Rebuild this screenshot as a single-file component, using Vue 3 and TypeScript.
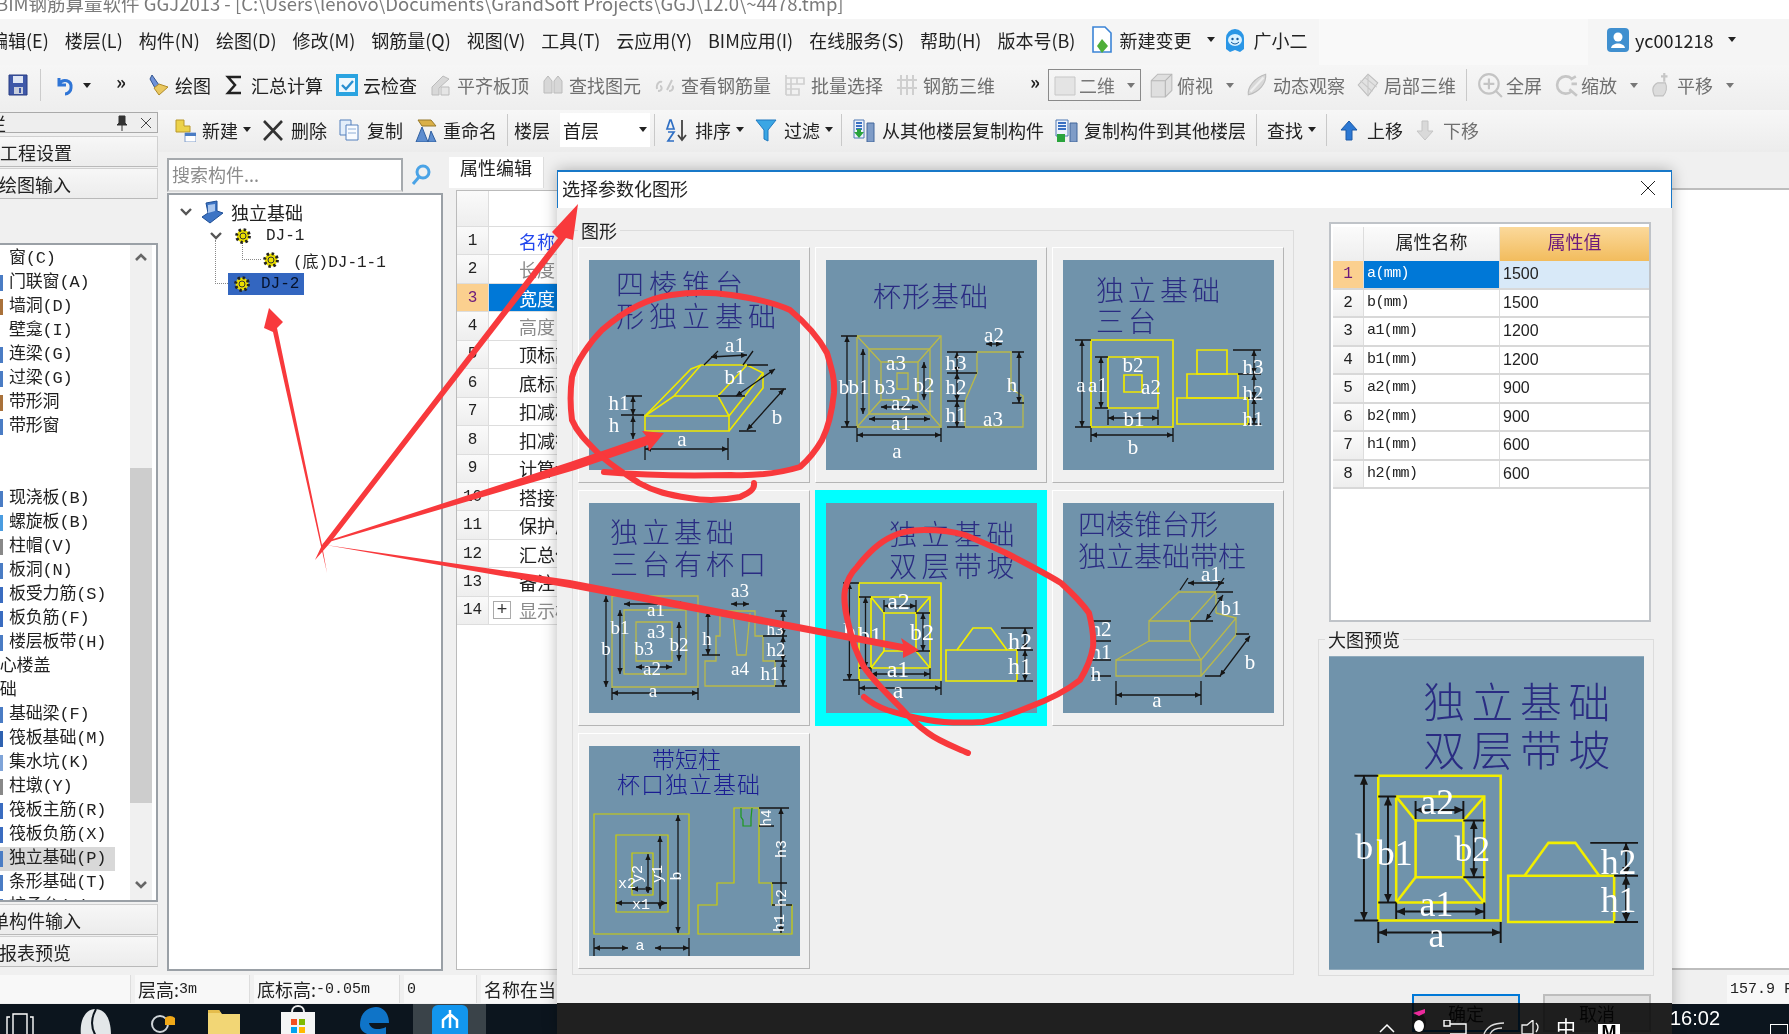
<script setup lang="ts">
interface Shape { d: string; f?: string; s?: string; w?: number }
interface Label { x: number; y: number; t: string; size?: number; rot?: number }
interface Diagram {
  titles: { x: number; y: number; t: string; size: number; gap: number }[]
  titleColor: string
  color: string
  width: number
  shapes: string[]
  dims: number[][]
  ticks: string
  labels: Label[]
  mono?: boolean
  active?: boolean
}

const L = (x: number, y: number, t: string, size?: number, rot?: number): Label => ({ x, y, t, size, rot })
const navy = '#2a2c82'

const diagrams: Diagram[] = [
  {
    titles: [
      { x: 27, y: 34.5, t: '四棱锥台', size: 28, gap: 5 },
      { x: 27, y: 66.5, t: '形独立基础', size: 28, gap: 5 },
    ],
    titleColor: navy,
    color: '#efe800',
    width: 1.6,
    shapes: [
      'M56 156H140V171H56Z',
      'M56 156L102 109L112 105H158L174 113V128L140 171',
      'M140 156L174 113M56 156L85 136H129L140 156M85 136L112 105M129 136L158 105',
    ],
    dims: [[56, 189, 139, 189], [122, 97, 158, 95], [186, 109, 147, 136], [195, 129, 158, 170], [44, 136, 44, 155], [44, 156, 44, 179]],
    ticks: 'M56 178V200M139 178V200M115 105L129 91M154 105L164 91M158 105H179M129 136H156M181 129H197M150 171H167M37 136H53M32 155H55',
    labels: [L(93, 186, 'a'), L(146, 92, 'a1'), L(146, 124, 'b1'), L(188, 164, 'b'), L(30, 150, 'h1'), L(25, 172, 'h')],
  },
  {
    titles: [{ x: 47, y: 47, t: '杯形基础', size: 28, gap: 1 }],
    titleColor: navy,
    color: '#b9b94a',
    width: 1.3,
    shapes: [
      'M31 76H115V167H31Z',
      'M43 89H104V154H43Z',
      'M55 102H92V140H55Z',
      'M71 113H82V129H71Z',
      'M31 76L55 102M115 76L92 102M31 167L55 140M115 167L92 140',
      'M151 92H185V129L197 136V167H139V141L151 113Z',
    ],
    dims: [[21, 76, 21, 167], [37, 89, 37, 154], [98, 102, 98, 140], [55, 147, 92, 147], [43, 159, 104, 159], [31, 175, 115, 175], [160, 84, 176, 84], [131, 92, 131, 113], [131, 113, 131, 141], [131, 141, 131, 167], [193, 92, 193, 143]],
    ticks: 'M15 76H31M15 167H31M31 168V182M115 168V182M121 92H151M121 113H151M121 141H139M121 167H139M186 92H198M186 143H198',
    labels: [L(168, 82, 'a2'), L(18, 134, 'b'), L(33, 134, 'b1'), L(59, 134, 'b3'), L(98, 132, 'b2'), L(70, 110, 'a3'), L(75, 150, 'a2'), L(75, 170, 'a1'), L(71, 198, 'a'), L(130, 110, 'h3'), L(130, 134, 'h2'), L(130, 162, 'h1'), L(186, 132, 'h'), L(167, 166, 'a3')],
  },
  {
    titles: [
      { x: 33, y: 41, t: '独立基础', size: 28, gap: 4 },
      { x: 33, y: 72, t: '三台', size: 28, gap: 4 },
    ],
    titleColor: navy,
    color: '#efe800',
    width: 1.7,
    shapes: ['M28 80H110V167H28Z', 'M45 97H95V148H45Z', 'M61 115H79V132H61Z', 'M134 90H164V114H134Z', 'M124 114H175V138H124Z', 'M114 138H185V164H114Z'],
    dims: [[19, 80, 19, 167], [38, 97, 38, 148], [45, 158, 95, 158], [28, 175, 110, 175], [191, 90, 191, 114], [191, 114, 191, 138], [191, 138, 191, 164]],
    ticks: 'M12 80H28M12 167H28M32 97H45M32 148H45M28 168V182M110 168V182M45 150V165M95 150V165M170 90H198M175 114H198M185 138H198M185 164H198',
    labels: [L(18, 132, 'a'), L(35, 132, 'a1'), L(70, 112, 'b2'), L(88, 134, 'a2'), L(71, 166, 'b1'), L(70, 194, 'b'), L(190, 114, 'h3'), L(190, 140, 'h2'), L(190, 166, 'h1')],
  },
  {
    titles: [
      { x: 21, y: 40, t: '独立基础', size: 28, gap: 4 },
      { x: 21, y: 72, t: '三台有杯口', size: 28, gap: 4 },
    ],
    titleColor: navy,
    color: '#b9b94a',
    width: 1.3,
    shapes: ['M23 93H109V184H23Z', 'M35 107H97V171H35Z', 'M47 119H83V158H47Z', 'M131 108H166V133H174V158H186V183H116V158H127V133H131Z', 'M144 110L148 152H157L161 110'],
    dims: [[17, 93, 17, 184], [31, 107, 31, 171], [23, 190, 109, 190], [35, 101, 97, 101], [90, 119, 90, 158], [47, 164, 83, 164], [142, 101, 160, 101], [119, 108, 119, 152], [194, 108, 194, 133], [194, 133, 194, 158], [194, 158, 194, 183]],
    ticks: 'M23 185V197M109 185V197M113 152H131M186 108H198M174 133H198M186 158H198M186 183H198',
    labels: [L(151, 94, 'a3', 19), L(67, 113, 'a1', 19), L(67, 135, 'a3', 19), L(31, 131, 'b1', 19), L(17, 152, 'b', 19), L(55, 152, 'b3', 19), L(90, 148, 'b2', 19), L(63, 172, 'a2', 19), L(64, 194, 'a', 19), L(118, 142, 'h', 19), L(151, 172, 'a4', 19), L(186, 132, 'h3', 17), L(187, 153, 'h2', 19), L(181, 177, 'h1', 19)],
  },
  {
    titles: [
      { x: 63, y: 41.5, t: '独立基础', size: 28, gap: 4.5 },
      { x: 63, y: 73.5, t: '双层带坡', size: 28, gap: 4.5 },
    ],
    titleColor: navy,
    color: '#f2ee00',
    width: 1.7,
    shapes: ['M33 80H115V177H33Z', 'M45 94H104V165H45Z', 'M58 110H90V148H58Z', 'M45 94L58 110M104 94L90 110M45 165L58 148M104 165L90 148', 'M120 147H191V178H120Z', 'M131 147L147 125H165L181 147'],
    dims: [[23.4, 80, 23.4, 177], [39.5, 94, 39.5, 165], [97, 110, 97, 148], [58, 103, 90, 103], [45, 171, 104, 171], [33, 185, 115, 185], [199, 125, 199, 147], [199, 147, 199, 178]],
    ticks: 'M17 80H33M17 177H33M33 94H45M33 165H45M90 110H104M90 148H104M58 97V109M90 97V109M45 165V176M104 165V176M33 178V192M115 178V192M175 125H207M191 147H207M191 178H207',
    labels: [L(23.5, 136, 'b', 24), L(44, 140, 'b1', 24), L(96, 137, 'b2', 24), L(72.5, 106, 'a2', 24), L(72, 174, 'a1', 24), L(72, 195, 'a', 24), L(194, 146, 'h2', 24), L(194, 171, 'h1', 24)],
    active: true,
  },
  {
    titles: [
      { x: 15, y: 32, t: '四棱锥台形', size: 28, gap: 0 },
      { x: 15, y: 64, t: '独立基础带柱', size: 28, gap: 0 },
    ],
    titleColor: navy,
    color: '#b9b94a',
    width: 1.3,
    shapes: ['M53 157H138V173H53Z', 'M86 118H127V138H86Z', 'M86 118L116 89H153L127 118V138M153 89V110', 'M53 157L86 138M138 157L127 138M138 157L173 115V132L138 173M153 110L173 115'],
    dims: [[125, 80, 161, 80], [160, 92, 143, 117], [187, 133, 157, 173], [53, 192, 138, 192]],
    ticks: 'M53 178V202M138 178V202M117 87L125 75M153 87L161 75M153 89H170M127 118H150M173 131H186M142 173H158M28 118H48M28 138H48M28 157H48M28 173H48',
    labels: [L(148, 78, 'a1'), L(168, 112, 'b1'), L(187, 166, 'b'), L(94, 204, 'a'), L(38, 133, 'h2'), L(38, 156, 'h1'), L(33, 178, 'h')],
  },
  {
    titles: [
      { x: 63, y: 22, t: '带短柱', size: 23, gap: 0 },
      { x: 28, y: 47, t: '杯口独立基础', size: 23, gap: 1 },
    ],
    titleColor: '#1a1c92',
    color: '#cfcf00',
    width: 1.2,
    shapes: ['M5 68H100V188H5Z', 'M27 89H79V166H27Z', 'M43 107H64V149H43Z', 'M145 62H170V137H183V159H203V188H109V159H128V137H145Z'],
    dims: [[89, 69, 89, 187], [71, 90, 71, 163], [59, 108, 59, 147], [43, 143, 63, 143], [27, 157, 78, 157], [5, 202, 39, 202], [66, 202, 100, 202], [192, 62, 192, 187]],
    ticks: 'M5 192V210M100 192V210M170 62H200M170 80H185M183 137H198M183 159H203',
    labels: [L(92, 130, 'b', 15, -90), L(73, 128, 'y1', 15, -90), L(53, 128, 'y2', 15, -90), L(38, 142, 'x2', 15), L(52, 163, 'x1', 15), L(51, 204, 'a', 15), L(182, 72, 'h4', 14, -90), L(197, 103, 'h3', 15, -90), L(197, 152, 'h2', 15, -90), L(195, 177, 'h1', 15, -90)],
    mono: true,
  },
]

const icons: Record<string, Shape[]> = {
  save: [{ d: 'M3 2H21V22H3Z', f: '#3f58a8', s: '#283d82' }, { d: 'M7 3H17V10H7Z', f: '#dfe6f4' }, { d: 'M8 14H17V21H8Z', f: '#c8cedc' }, { d: 'M13 15H15V20H13Z', f: '#3f58a8' }],
  undo: [{ d: 'M6 5V12H13M6 11C10 5 19 7 18 15C18 18 15 21 12 21', s: '#2f75d6', w: 3 }],
  draw: [{ d: 'M5 2L12 12L8 15L3 6Z', f: '#6e91d8', s: '#33558f' }, { d: 'M12 11L21 14L12 22L7 15Z', f: '#e9c75f', s: '#b08b2a' }],
  sum: [{ d: 'M18 4H5L12 12L5 20H18', s: '#222', w: 2.5 }],
  cloud: [{ d: 'M1 1H23V23H1Z', f: '#2aa3e0' }, { d: 'M4 5H20V19H4Z', f: '#eef7fd' }, { d: 'M7 12L11 16L18 8', s: '#2a8fd0', w: 2.4 }],
  align: [{ d: 'M3 22V14L14 3L20 6L10 15V22Z', f: '#d8d8d8', s: '#bbb' }, { d: 'M12 22V14H20V22Z', f: '#e5e5e5', s: '#bbb' }],
  find: [{ d: 'M3 20V8L7 3L11 8V20ZM13 20V8L17 3L21 8V20Z', f: '#d7d7d7', s: '#bbb' }],
  rebar: [{ d: 'M4 16C3 10 7 8 9 9M5 18C10 18 9 13 7 13M14 17L19 7M16 18C20 18 21 14 19 13', s: '#c9c9c9', w: 2 }],
  batch: [{ d: 'M3 2V22M3 5H21V11H3M3 16H16V22H3M8 5V22M14 5V11', s: '#d0d0d0', w: 1.7 }],
  rebar3: [{ d: 'M2 7H22M2 15H22M6 2V22M12 2V22M18 2V22', s: '#cfcfcf', w: 2 }],
  box: [{ d: 'M3 8L9 2H22V17L16 23H3Z', f: '#dfdfdf', s: '#bbb' }, { d: 'M3 8H16V23M16 8L22 2', s: '#b5b5b5' }],
  orbit: [{ d: 'M4 21C3 14 10 5 20 2C21 10 14 19 4 21Z', f: '#d8d8d8', s: '#bbb' }, { d: 'M6 18L18 5', s: '#eee', w: 2 }],
  local: [{ d: 'M12 2L21 10L12 22L3 12Z', f: '#e2e2e2', s: '#bdbdbd' }, { d: 'M5 8L16 18M9 5L20 14M12 2V22', s: '#c8c8c8' }],
  full: [{ d: 'M20 11A9 9 0 1 1 2 11A9 9 0 1 1 20 11ZM17 17L23 23M6 11H16M11 6V16', s: '#c4c4c4', w: 2 }],
  zoom: [{ d: 'M18 6A8 8 0 1 0 18 18M16 16L23 22M17 7L22 4M18 11H23', s: '#c6c6c6', w: 2.4 }],
  pan: [{ d: 'M6 22C3 16 5 12 9 10L16 10C18 14 17 19 14 22Z', f: '#dcdcdc', s: '#c0c0c0' }, { d: 'M15 9V1M12 4H18', s: '#c6c6c6', w: 2 }],
  plan: [{ d: 'M2 4H22V22H2Z', f: '#e4e4e4', s: '#c7c7c7' }],
  add: [{ d: 'M4 2H12V8H18V14H4Z', f: '#ecd24a', s: '#b9982b' }, { d: 'M13 15H24V24H13Z', f: '#fff', s: '#7e9ccb' }, { d: 'M13 15H24V18H13Z', f: '#4a7cc4' }],
  del: [{ d: 'M3 3L21 22M21 3L3 22', s: '#333', w: 2.6 }],
  copy: [{ d: 'M3 2H14V17H3Z', f: '#e3eefa', s: '#5480bd' }, { d: 'M9 7H21V22H9Z', f: '#f8fbff', s: '#5480bd' }, { d: 'M11 11H19M11 15H19', s: '#8eaed6' }],
  rename: [{ d: 'M5 2H18L23 8H9Z', f: '#dab048', s: '#96782a' }, { d: 'M3 24L9 9L15 24ZM15 24L18 13L23 24Z', f: '#5d8dcf', s: '#2f5f9f' }],
  sort: [{ d: 'M5 2L2 11H9L6 2ZM3 14H9L3 23H9', s: '#2f6fc4', w: 1.7 }, { d: 'M17 2V21M13 17L17 22L21 17', s: '#444', w: 1.8 }],
  filter: [{ d: 'M2 2H22L14 12V23L10 21V12Z', f: '#3aa6e4', s: '#1f79c0' }],
  copyIn: [{ d: 'M2 2H12V20H2Z', f: '#eef3fb', s: '#4e78b4' }, { d: 'M4 5H10M4 8H10M4 11H10', s: '#3a70c2', w: 2 }, { d: 'M2 14L7 20L12 14H9V11H5V14Z', f: '#2aa43c' }, { d: 'M15 5H22V24H15Z', f: '#7f9cc7', s: '#43669b' }],
  copyOut: [{ d: 'M2 2H14V18H2Z', f: '#eef3fb', s: '#4e78b4' }, { d: 'M4 5H12M4 8H12M4 11H12', s: '#3a70c2', w: 2 }, { d: 'M3 16H11V24H3Z', f: '#2aa43c' }, { d: 'M16 5H23V24H16Z', f: '#7f9cc7', s: '#43669b' }],
  up: [{ d: 'M12 3L20 12H15V22H9V12H4Z', f: '#2c78d3', s: '#1c5aa8' }],
  down: [{ d: 'M12 22L20 13H15V3H9V13H4Z', f: '#d9d9d9', s: '#c5c5c5' }],
}

interface ToolItem { icon?: string; label?: string; off?: boolean; arrow?: boolean; sep?: boolean; tight?: boolean }

const tools1: ToolItem[] = [
  { icon: 'draw', label: '绘图' }, { icon: 'sum', label: '汇总计算' }, { icon: 'cloud', label: '云检查' },
  { icon: 'align', label: '平齐板顶', off: true }, { icon: 'find', label: '查找图元', off: true },
  { icon: 'rebar', label: '查看钢筋量', off: true }, { icon: 'batch', label: '批量选择', off: true },
  { icon: 'rebar3', label: '钢筋三维', off: true },
]
const tools1b: ToolItem[] = [
  { icon: 'box', label: '俯视', off: true, arrow: true }, { icon: 'orbit', label: '动态观察', off: true },
  { icon: 'local', label: '局部三维', off: true }, { sep: true }, { icon: 'full', label: '全屏', off: true },
  { icon: 'zoom', label: '缩放', off: true, arrow: true }, { icon: 'pan', label: '平移', off: true, arrow: true },
]
const tools2a: ToolItem[] = [
  { icon: 'add', label: '新建', arrow: true }, { icon: 'del', label: '删除' },
  { icon: 'copy', label: '复制' }, { icon: 'rename', label: '重命名' }, { sep: true },
]
const tools2b: ToolItem[] = [
  { sep: true }, { icon: 'sort', label: '排序', arrow: true }, { icon: 'filter', label: '过滤', arrow: true }, { sep: true, tight: true },
  { icon: 'copyIn', label: '从其他楼层复制构件' }, { icon: 'copyOut', label: '复制构件到其他楼层' }, { sep: true },
  { label: '查找', arrow: true }, { sep: true }, { icon: 'up', label: '上移' }, { icon: 'down', label: '下移', off: true },
]

const menus = ['编辑(E)', '楼层(L)', '构件(N)', '绘图(D)', '修改(M)', '钢筋量(Q)', '视图(V)', '工具(T)', '云应用(Y)', 'BIM应用(I)', '在线服务(S)', '帮助(H)', '版本号(B)']

const modules = [
  { t: '窗(C)', c: '' }, { t: '门联窗(A)', c: '#4a7cc4' }, { t: '墙洞(D)', c: '#a9713a' }, { t: '壁龛(I)', c: '' },
  { t: '连梁(G)', c: '#4a7cc4' }, { t: '过梁(G)', c: '#4a7cc4' }, { t: '带形洞', c: '#a9713a' }, { t: '带形窗', c: '#4a7cc4' },
  { t: '', c: '' }, { t: '', c: '' }, { t: '现浇板(B)', c: '#4a7cc4' }, { t: '螺旋板(B)', c: '#4a9ce0' },
  { t: '柱帽(V)', c: '#888' }, { t: '板洞(N)', c: '#4a7cc4' }, { t: '板受力筋(S)', c: '#3a6cc0' }, { t: '板负筋(F)', c: '#3a6cc0' },
  { t: '楼层板带(H)', c: '#4a7cc4' }, { t: '空心楼盖', c: '', out: true }, { t: '基础', c: '', out: true }, { t: '基础梁(F)', c: '#4a7cc4' },
  { t: '筏板基础(M)', c: '#2f62b0' }, { t: '集水坑(K)', c: '#7fa4d8' }, { t: '柱墩(Y)', c: '#888' }, { t: '筏板主筋(R)', c: '#3a6cc0' },
  { t: '筏板负筋(X)', c: '#3a6cc0' }, { t: '独立基础(P)', c: '#4a7cc4', on: true }, { t: '条形基础(T)', c: '#4a7cc4' }, { t: '桩承台(V)', c: '#4a7cc4' },
] as { t: string; c: string; out?: boolean; on?: boolean }[]

const propRows = ['名称', '长度', '宽度', '高度', '顶标高', '底标高', '扣减板', '扣减筏', '计算设置', '搭接设置', '保护层', '汇总信息', '备注', '显示样式']
const params = [
  ['a(mm)', '1500'], ['b(mm)', '1500'], ['a1(mm)', '1200'], ['b1(mm)', '1200'],
  ['a2(mm)', '900'], ['b2(mm)', '900'], ['h1(mm)', '600'], ['h2(mm)', '600'],
]
</script>

<template>
  <div class="stage">
    <div class="screen">
      <svg class="defs" width="0" height="0" aria-hidden="true">
        <defs>
          <marker id="tip" viewBox="0 0 10 10" refX="10" refY="5" markerUnits="userSpaceOnUse" markerWidth="6" markerHeight="6" orient="auto-start-reverse">
            <path d="M0 0.5L10 5L0 9.5z" fill="#161616" />
          </marker>
        </defs>
      </svg>

      <div class="title">BIM钢筋算量软件 GGJ2013 - [C:\Users\lenovo\Documents\GrandSoft Projects\GGJ\12.0\~4478.tmp]</div>

      <div class="menu">
        <span v-for="m in menus" :key="m" class="menu__item">{{ m }}</span>
        <span class="menu__item menu__item--icon">
          <svg width="22" height="28" viewBox="0 0 22 28"><path d="M2 1H14L20 7V26H2Z" fill="#fff" stroke="#3b84d6" stroke-width="1.6" /><path d="M11 13L17 20L11 27L6 20Z" fill="#4fae38" /></svg>
          新建变更<i class="caret" />
        </span>
        <span class="menu__item menu__item--icon menu__item--helper">
          <svg width="24" height="26" viewBox="0 0 24 26"><path d="M3 22V11A9 9 0 0 1 21 11V22L17 25L12 23L7 25Z" fill="#2a96e6" /><ellipse cx="12" cy="13" rx="7" ry="6" fill="#d9f1ff" /><circle cx="9.5" cy="12" r="1.2" fill="#145a9c" /><circle cx="14.5" cy="12" r="1.2" fill="#145a9c" /><path d="M8 15Q12 19 16 15" stroke="#145a9c" fill="none" /></svg>
          广小二
        </span>
        <span class="menu__blank" />
        <span class="menu__user">
          <svg width="24" height="26" viewBox="0 0 24 26"><rect x="1" y="1" width="22" height="24" rx="4" fill="#3f8fcf" /><circle cx="12" cy="10" r="4.5" fill="#fff" /><path d="M5 21C6 15 18 15 19 21Z" fill="#fff" /></svg>
          yc001218<i class="caret" />
        </span>
      </div>

      <div class="tools1">
        <span class="tool tool--ico"><svg width="24" height="24" viewBox="0 0 24 24"><path v-for="(p, i) in icons.save" :key="i" :d="p.d" :fill="p.f || 'none'" :stroke="p.s || 'none'" :stroke-width="p.w || 1" /></svg></span>
        <span class="tools1__sep" />
        <span class="tool tool--ico tool--undo"><svg width="24" height="24" viewBox="0 0 24 24"><path v-for="(p, i) in icons.undo" :key="i" :d="p.d" :fill="p.f || 'none'" :stroke="p.s || 'none'" :stroke-width="p.w || 1" /></svg><i class="caret" /></span>
        <span class="more more--a">»</span>
        <div class="tool-row tool-row--first">
          <span v-for="t in tools1" :key="t.label" class="tool" :class="{ 'tool--off': t.off }">
            <svg width="24" height="24" viewBox="0 0 24 24"><path v-for="(p, i) in icons[t.icon!]" :key="i" :d="p.d" :fill="p.f || 'none'" :stroke="p.s || 'none'" :stroke-width="p.w || 1" /></svg>
            {{ t.label }}
          </span>
        </div>
        <span class="more more--b">»</span>
        <span class="view-box">
          <svg width="24" height="24" viewBox="0 0 24 24"><path v-for="(p, i) in icons.plan" :key="i" :d="p.d" :fill="p.f" :stroke="p.s" /></svg>
          二维<i class="caret caret--soft" />
        </span>
        <div class="tool-row tool-row--second">
          <template v-for="(t, n) in tools1b" :key="n">
            <span v-if="t.sep" class="sep" />
            <span v-else class="tool" :class="{ 'tool--off': t.off }">
              <svg width="26" height="26" viewBox="0 0 24 24"><path v-for="(p, i) in icons[t.icon!]" :key="i" :d="p.d" :fill="p.f || 'none'" :stroke="p.s || 'none'" :stroke-width="p.w || 1" /></svg>
              {{ t.label }}<i v-if="t.arrow" class="caret caret--soft caret--spaced" />
            </span>
          </template>
        </div>
      </div>

      <div class="work">
        <aside class="side">
          <div class="side__head">
            <span class="side__cut">栏</span>
            <svg width="12" height="16" viewBox="0 0 12 16"><path d="M3 1H9V8L11 10H1L3 8ZM6 10V16" fill="#333" stroke="#333" /></svg>
            <svg width="12" height="12" viewBox="0 0 12 12"><path d="M1 1L11 11M11 1L1 11" stroke="#444" fill="none" /></svg>
          </div>
          <div class="side__btn side__btn--top">工程设置</div>
          <div class="side__btn side__btn--cut">绘图输入</div>
          <div class="modules">
            <div class="modules__list">
              <div v-for="(m, i) in modules" :key="i" class="mod" :class="{ 'mod--on': m.on, 'mod--out': m.out }">
                <i v-if="m.c" class="mod__stub" :style="{ background: m.c }" />
                {{ m.t }}
              </div>
            </div>
            <div class="scroll">
              <svg width="14" height="10" viewBox="0 0 14 10"><path d="M2 8L7 3L12 8" stroke="#666" stroke-width="2.6" fill="none" /></svg>
              <i class="scroll__thumb" />
              <svg width="14" height="10" viewBox="0 0 14 10"><path d="M2 2L7 7L12 2" stroke="#666" stroke-width="2.6" fill="none" /></svg>
            </div>
          </div>
          <div class="side__btn side__btn--cut2">单构件输入</div>
          <div class="side__btn side__btn--cut">报表预览</div>
        </aside>

        <div class="center">
          <div class="tools2">
            <template v-for="(t, n) in tools2a" :key="n">
              <span v-if="t.sep" class="sep" />
              <span v-else class="tool">
                <svg width="24" height="24" viewBox="0 0 24 24"><path v-for="(p, i) in icons[t.icon!]" :key="i" :d="p.d" :fill="p.f || 'none'" :stroke="p.s || 'none'" :stroke-width="p.w || 1" /></svg>
                {{ t.label }}<i v-if="t.arrow" class="caret" />
              </span>
            </template>
            <span class="floor">楼层</span>
            <span class="floor-box">首层<i class="caret" /></span>
            <template v-for="(t, n) in tools2b" :key="'b' + n">
              <span v-if="t.sep" class="sep" :class="{ 'sep--tight': t.tight }" />
              <span v-else class="tool" :class="{ 'tool--off': t.off }">
                <svg v-if="t.icon" width="24" height="24" viewBox="0 0 24 24"><path v-for="(p, i) in icons[t.icon]" :key="i" :d="p.d" :fill="p.f || 'none'" :stroke="p.s || 'none'" :stroke-width="p.w || 1" /></svg>
                {{ t.label }}<i v-if="t.arrow" class="caret" />
              </span>
            </template>
          </div>

          <div class="panes">
            <section class="tree">
              <div class="tree__search">
                <span class="tree__input">搜索构件...</span>
                <svg width="22" height="24" viewBox="0 0 22 24"><circle cx="13" cy="9" r="6" fill="none" stroke="#4aa3e6" stroke-width="3" /><path d="M9 14L3 21" stroke="#4aa3e6" stroke-width="3" /></svg>
              </div>
              <div class="tree__body">
                <i class="tree__dots tree__dots--a" />
                <i class="tree__dots tree__dots--b" />
                <div class="node node--root">
                  <svg class="chev" width="14" height="10" viewBox="0 0 14 10"><path d="M2 2L7 7L12 2" stroke="#555" stroke-width="2.4" fill="none" /></svg>
                  <svg width="26" height="26" viewBox="0 0 26 26"><path d="M7 4L18 2V12L24 14L11 24L3 18L9 14Z" fill="#3d74c4" stroke="#1f4f95" /><path d="M9 6L16 5V12L9 14Z" fill="#a9c6ee" /></svg>
                  独立基础
                </div>
                <div class="node node--one">
                  <svg class="chev" width="14" height="10" viewBox="0 0 14 10"><path d="M2 2L7 7L12 2" stroke="#555" stroke-width="2.4" fill="none" /></svg>
                  <svg class="gear" width="18" height="18" viewBox="0 0 18 18"><circle cx="9" cy="9" r="6.4" fill="#eadf00" stroke="#222" stroke-width="3" stroke-dasharray="2.4 2.6" /><circle cx="9" cy="9" r="3" fill="#eadf00" stroke="#333" /></svg>
                  <span class="mono">DJ-1</span>
                </div>
                <div class="node node--two">
                  <svg class="gear" width="18" height="18" viewBox="0 0 18 18"><circle cx="9" cy="9" r="6.4" fill="#eadf00" stroke="#222" stroke-width="3" stroke-dasharray="2.4 2.6" /><circle cx="9" cy="9" r="3" fill="#eadf00" stroke="#333" /></svg>
                  <span class="mono">(底)DJ-1-1</span>
                </div>
                <div class="node node--three">
                  <span class="node__sel">
                    <svg class="gear" width="18" height="18" viewBox="0 0 18 18"><circle cx="9" cy="9" r="6.4" fill="#eadf00" stroke="#222" stroke-width="3" stroke-dasharray="2.4 2.6" /><circle cx="9" cy="9" r="3" fill="#eadf00" stroke="#333" /></svg>
                    <span class="mono">DJ-2</span>
                  </span>
                </div>
              </div>
            </section>

            <section class="props">
              <div class="props__tabs"><span class="props__tab">属性编辑</span></div>
              <div class="props__grid">
                <div class="prow prow--head"><span class="prow__num" /><span class="prow__name" /></div>
                <div v-for="(r, i) in propRows" :key="r" class="prow" :class="['prow--' + i]">
                  <span class="prow__num">{{ i + 1 }}</span>
                  <span class="prow__name"><i v-if="i === 13" class="prow__plus">+</i>{{ r }}</span>
                </div>
              </div>
            </section>
            <div class="rest" />
          </div>
        </div>
      </div>

      <div class="status">
        <span class="status__cell status__cell--a" />
        <span class="status__cell status__cell--b">层高:<em>3m</em></span>
        <span class="status__cell status__cell--c">底标高:<em>-0.05m</em></span>
        <span class="status__cell status__cell--d"><em>0</em></span>
        <span class="status__cell status__cell--e">名称在当前层</span>
        <span class="status__fill" />
        <span class="status__cell status__cell--f"><em>157.9 F</em></span>
      </div>

      <div class="taskbar">
        <svg class="task task--view" width="32" height="24" viewBox="0 0 32 24"><path d="M9 2H23V24H9ZM6 5H3V24M26 5H29V24" fill="none" stroke="#fff" stroke-width="1.4" /></svg>
        <svg class="task task--a" width="34" height="30" viewBox="0 0 34 30"><path d="M2 30C0 12 8 3 16 3C26 3 32 12 32 30Z" fill="#e3e7e9" /><path d="M17 3C12 12 12 22 17 30" stroke="#0c151e" fill="none" stroke-width="2" /></svg>
        <svg class="task task--b" width="30" height="30" viewBox="0 0 30 30"><circle cx="11" cy="18" r="8" fill="none" stroke="#cfd4d8" stroke-width="2" /><path d="M16 12A7 7 0 0 1 26 12V19H16Z" fill="#f0a818" /></svg>
        <svg class="task task--c" width="34" height="30" viewBox="0 0 34 30"><path d="M1 4H12L15 8H33V30H1Z" fill="#f2d675" /><path d="M1 4H12L14 7H1Z" fill="#e5bd4c" /></svg>
        <svg class="task task--d" width="36" height="32" viewBox="0 0 36 32"><path d="M12 8C12 0 24 0 24 8" fill="none" stroke="#eee" stroke-width="2" /><path d="M1 8H35V32H1Z" fill="#f5f5f5" /><path d="M11 15H17V21H11Z" fill="#f25022" /><path d="M19 15H25V21H19Z" fill="#7fba00" /><path d="M11 23H17V29H11Z" fill="#00a4ef" /><path d="M19 23H25V29H19Z" fill="#ffb900" /></svg>
        <svg class="task task--e" width="32" height="30" viewBox="0 0 32 30"><path d="M2 20C2 6 12 2 18 2C26 2 31 9 31 18H11C12 24 20 26 28 22V29C18 33 2 30 2 20Z" fill="#0f74c8" /></svg>
        <span class="task-on">
          <svg width="38" height="32" viewBox="0 0 38 32"><rect x="1" y="1" width="36" height="36" rx="6" fill="#1296ee" /><path d="M19 6V24M12 24V16L19 10L26 16V24" stroke="#fff" stroke-width="2.5" fill="none" /></svg>
        </span>
      </div>

      <!-- floating dialog -->
      <div class="dialog">
        <header class="dialog__bar">
          <span>选择参数化图形</span>
          <svg width="16" height="16" viewBox="0 0 16 16"><path d="M1 1L15 15M15 1L1 15" stroke="#222" fill="none" /></svg>
        </header>
        <div class="dialog__body">
          <fieldset class="group group--shapes">
            <legend>图形</legend>
            <div class="thumbs">
              <div v-for="(d, n) in diagrams" :key="n" class="thumb" :class="{ 'thumb--on': d.active }">
                <svg class="thumb__img" viewBox="0 0 211 210">
                  <g :id="'shape-' + n">
                    <rect width="211" height="210" fill="#7093ab" />
                    <text v-for="t in d.titles" :key="t.t" :x="t.x" :y="t.y" :font-size="t.size" :letter-spacing="t.gap" :fill="d.titleColor" font-family="Noto Sans CJK SC, sans-serif" font-weight="300">{{ t.t }}</text>
                    <path v-for="s in d.shapes" :key="s" :d="s" fill="none" :stroke="d.color" :stroke-width="d.width" />
                    <path :d="d.ticks" fill="none" stroke="#161616" stroke-width="1.3" />
                    <line v-for="(l, i) in d.dims" :key="i" :x1="l[0]" :y1="l[1]" :x2="l[2]" :y2="l[3]" stroke="#161616" stroke-width="1.3" marker-start="url(#tip)" marker-end="url(#tip)" />
                    <text
                      v-for="l in d.labels"
                      :key="l.t + l.x"
                      :x="l.x"
                      :y="l.y"
                      :font-size="l.size || 21"
                      :transform="l.rot ? `rotate(${l.rot} ${l.x} ${l.y})` : undefined"
                      :font-family="d.mono ? 'Liberation Mono, monospace' : 'Liberation Serif, serif'"
                      text-anchor="middle"
                      fill="#fff"
                    >{{ l.t }}</text>
                    <path v-if="d.mono" d="M152 62V71L154 74V80H162V72L163 62" fill="none" stroke="#1c9a1c" stroke-width="1.2" />
                  </g>
                </svg>
              </div>
            </div>
          </fieldset>

          <div class="dialog__side">
            <div class="params">
              <div class="params__head">
                <span class="params__corner" />
                <span class="params__name">属性名称</span>
                <span class="params__value">属性值</span>
              </div>
              <div v-for="(p, i) in params" :key="p[0]" class="params__row" :class="{ 'params__row--on': i === 0 }">
                <span class="params__num">{{ i + 1 }}</span>
                <span class="params__key">{{ p[0] }}</span>
                <span class="params__val">{{ p[1] }}</span>
              </div>
            </div>
            <fieldset class="group group--preview">
              <legend>大图预览</legend>
              <svg class="preview" viewBox="0 0 211 210"><use href="#shape-4" /></svg>
            </fieldset>
            <div class="dialog__btns">
              <span class="btn btn--ok">确定</span>
              <span class="btn">取消</span>
            </div>
          </div>
        </div>
        <i class="dialog__shade" />
      </div>

      <div class="tray">
        <svg width="18" height="12" viewBox="0 0 18 12"><path d="M2 10L9 3L16 10" stroke="#fff" stroke-width="1.5" fill="none" /></svg>
        <svg width="18" height="26" viewBox="0 0 18 26"><ellipse cx="9" cy="15" rx="7" ry="10" fill="#111" /><ellipse cx="9" cy="18" rx="5" ry="6" fill="#fff" /><path d="M3 5L9 8L15 5V1Z" fill="#ea2a9c" /></svg>
        <svg width="26" height="14" viewBox="0 0 26 14"><path d="M2 0V6H8V0ZM8 4H24V14H8" fill="none" stroke="#fff" stroke-width="1.4" /></svg>
        <svg width="24" height="14" viewBox="0 0 24 14"><path d="M2 14C6 4 16 3 22 3M8 14C10 10 14 8 20 8" stroke="#ddd" fill="none" stroke-width="1.3" /></svg>
        <svg width="22" height="14" viewBox="0 0 22 14"><path d="M2 5H7L13 0V14H2ZM16 3Q20 7 16 12" stroke="#eee" fill="none" stroke-width="1.3" /></svg>
        <span class="tray__ime">中</span>
        <span class="tray__m">M</span>
        <span class="tray__time">16:02</span>
        <i class="tray__box" />
      </div>
    </div>

    <!-- pen marks on top of the screenshot -->
    <svg class="ink" viewBox="0 0 1789 1034" aria-hidden="true">
      <g fill="#f8393c">
        <path d="M327 573L273 332L264 328L269 308L283 322L277 328L322 545Z" />
        <path d="M315 560L322 545L558 238L552 232L578 204L573 240L566 238L330 543Z" />
        <path d="M322 544L327 541L570 462L646 436L642 431L664 433L649 451L648 445L575 470Z" />
        <path d="M326 545L570 580L903 644L901 638L919 650L903 658L903 651L570 588Z" />
      </g>
      <g fill="none" stroke="#f8393c" stroke-width="6" stroke-linecap="round" stroke-linejoin="round">
        <path d="M754 483C755 490 748 493 740 497C725 500 705 501 689 498C670 495 655 492 639 483C625 474 610 465 598 453C585 440 577 432 572 420C570 405 570 392 572 377C576 362 590 342 602 330C625 310 650 298 671 295C690 292 712 292 731 295C752 298 775 303 790 310C808 325 820 340 827 353C832 370 835 380 834 393C832 412 828 428 822 440C815 452 808 460 800 467C780 473 755 476 731 475C690 476 640 475 604 472" />
        <path d="M968 753C955 747 940 742 928 733C918 726 908 716 900 707C885 692 873 680 864 667C856 652 852 642 850 630C846 615 843 602 845 590C847 580 851 573 857 567C868 553 880 542 891 537C902 531 913 530 924 530C938 530 952 531 965 535C980 541 993 547 1006 553C1025 563 1045 573 1061 583C1072 593 1082 603 1089 613C1092 625 1094 636 1093 647C1091 660 1086 670 1080 680C1065 692 1048 700 1029 707C1012 714 998 719 983 722C965 723 945 723 928 720C912 717 899 714 887 710C876 706 870 702 864 697" />
      </g>
    </svg>
  </div>
</template>

<style>
html, body { margin: 0; background: #fff; overflow: hidden; }
</style>

<style scoped>
.stage { position: relative; width: 1789px; height: 1034px; overflow: hidden; }
.screen {
  position: relative;
  width: 1789px;
  height: 1034px;
  display: flex;
  flex-direction: column;
  overflow: hidden;
  filter: blur(0.45px);
  background: #f5f5f5;
  color: #222;
  font-family: "Noto Sans CJK SC", "Liberation Sans", sans-serif;
  font-size: 18px;
}
.defs { position: absolute; }
.ink { position: absolute; inset: 0; width: 1789px; height: 1034px; pointer-events: none; }

.title {
  height: 19px;
  flex: none;
  background: #fff;
  color: #7a7a7a;
  font-size: 18.5px;
  line-height: 6px;
  white-space: nowrap;
  overflow: hidden;
  margin-left: -4px;
}

.menu {
  height: 46px;
  box-sizing: border-box;
  padding-bottom: 5px;
  flex: none;
  display: flex;
  align-items: center;
  gap: 16px;
  margin-left: -10px;
  background: #f5f5f5;
  white-space: nowrap;
}
.menu__item--icon { display: inline-flex; align-items: center; gap: 6px; }
.menu__item--helper { margin-left: -8px; }
.menu__blank { flex: 1; height: 46px; margin: 0 0 -5px -4px; background: #f9f9f9; }
.menu__user { display: inline-flex; align-items: center; gap: 5px; width: 192px; margin-left: -7px; box-sizing: border-box; padding-left: 9px; }
.caret {
  display: inline-block;
  width: 0;
  height: 0;
  margin-left: 10px;
  border: 4px solid transparent;
  border-top: 5px solid #222;
  border-bottom: 0;
  vertical-align: middle;
}
.caret--soft { border-top-color: #777; }
.caret--spaced { margin-left: 10px; }

.tools1 {
  height: 45px;
  box-sizing: border-box;
  padding-bottom: 5px;
  flex: none;
  display: flex;
  align-items: center;
  background: linear-gradient(#f6f6f6, #eeeeee);
  white-space: nowrap;
}
.tool { display: inline-flex; align-items: center; gap: 4px; white-space: nowrap; }
.tool--off { color: #6f6f6f; }
.tool--ico { margin-left: 6px; }
.tool--undo { gap: 0; margin-left: 12px; width: 57px; }
.tool--undo .caret { margin-left: 6px; }
.tools1__sep { width: 1px; height: 32px; margin-left: 10px; background: #ccc; }
.more { font-size: 19px; font-weight: 700; line-height: 12px; align-self: flex-start; margin-top: 10px; }
.more--a { margin-left: 6px; width: 27px; }
.more--b { margin-left: 35px; width: 18px; }
.tool-row { display: flex; align-items: center; gap: 12px; }
.tool-row--first { margin-left: 4px; }
.tool-row--second { margin-left: 7px; gap: 10px; }
.tool-row--second .tool { gap: 3px; }
.view-box {
  display: inline-flex;
  align-items: center;
  gap: 2px;
  width: 93px;
  height: 32px;
  box-sizing: border-box;
  padding-left: 4px;
  border: 1.5px solid #8a8a8a;
  color: #777;
}
.view-box .caret { margin-left: 10px; }
.sep { width: 1px; height: 32px; background: #c9c9c9; flex: none; }
.sep--tight { margin-left: -2px; }

.work { flex: 1; min-height: 0; display: flex; background: #f0f0f0; }

.side { width: 158px; flex: none; display: flex; flex-direction: column; padding-top: 2px; box-sizing: border-box; overflow: hidden; }
.side__head {
  height: 21px;
  box-sizing: border-box;
  display: flex;
  align-items: center;
  justify-content: flex-end;
  gap: 12px;
  padding-right: 5px;
  border: 1px solid #aaa;
  border-left: 0;
  background: #eee;
  position: relative;
}
.side__cut { position: absolute; left: -12px; top: -3px; }
.side__btn {
  height: 31px;
  box-sizing: border-box;
  margin-top: 1px;
  flex: none;
  display: flex;
  align-items: center;
  border: 1px solid #d0d0d0;
  border-left: 0;
  border-bottom-color: #b9b9b9;
  background: linear-gradient(#f7f7f7, #ececec);
  white-space: nowrap;
}
.side__btn--top { margin-top: 3px; }
.side__btn--cut { text-indent: -1px; }
.side__btn--cut2 { text-indent: -9px; }
.modules {
  height: 659px;
  flex: none;
  margin-top: 44px;
  margin-bottom: 1px;
  display: flex;
  border: 2px solid #9aa0a6;
  border-left: 0;
  background: #fff;
  box-sizing: border-box;
  overflow: hidden;
}
.modules__list { flex: 1; min-width: 0; padding-top: 2px; overflow: hidden; }
.mod {
  position: relative;
  height: 24px;
  line-height: 24px;
  padding-left: 9px;
  font-family: "Liberation Mono", "Noto Sans CJK SC", monospace;
  font-size: 17px;
  white-space: nowrap;
  letter-spacing: -0.2px;
}
.mod__stub { position: absolute; left: 0; top: 4px; width: 3px; height: 16px; }
.mod--out { padding-left: 0; text-indent: -17px; }
.mod--on { background: #d8d8d8; margin-right: 15px; }
.scroll {
  width: 22px;
  flex: none;
  margin-right: 4px;
  background: #f0f0f0;
  display: flex;
  flex-direction: column;
  align-items: center;
  padding: 7px 0 10px;
  box-sizing: border-box;
}
.scroll__thumb { display: block; width: 22px; height: 335px; margin: 206px 0 auto; background: #cdcdcd; }

.center { flex: 1; min-width: 0; display: flex; flex-direction: column; }
.tools2 {
  height: 42px;
  box-sizing: border-box;
  padding: 0 0 3px 14px;
  flex: none;
  display: flex;
  align-items: center;
  gap: 10px;
  background: linear-gradient(#f7f7f7, #ececec);
  white-space: nowrap;
}
.tools2 .tool { gap: 6px; }
.tools2 .caret { margin-left: -1px; }
.floor { margin-left: -4px; }
.floor-box {
  width: 90px;
  height: 34px;
  margin-right: -6px;
  box-sizing: border-box;
  display: flex;
  align-items: center;
  justify-content: space-between;
  padding: 0 3px;
  background: #fff;
}
.panes { flex: 1; min-height: 0; display: flex; padding-top: 5px; }
.tree { width: 276px; margin-left: 9px; flex: none; display: flex; flex-direction: column; margin-bottom: 4px; }
.tree__search { height: 36px; flex: none; display: flex; align-items: center; gap: 7px; }
.tree__input {
  width: 236px;
  height: 34px;
  box-sizing: border-box;
  padding-left: 3px;
  border: 2px solid #a5a9ad;
  border-bottom-color: #ddd;
  background: #fff;
  color: #8c8c8c;
  line-height: 28px;
}
.tree__body {
  position: relative;
  flex: 1;
  border: 2px solid #9aa0a6;
  background: #fff;
  padding-top: 5px;
  box-sizing: border-box;
}
.tree__dots { position: absolute; border-left: 1px dotted #888; border-bottom: 1px dotted #888; }
.tree__dots--a { left: 46px; top: 45px; width: 14px; height: 43px; }
.tree__dots--b { left: 73px; top: 45px; width: 18px; height: 19px; }
.node { position: relative; height: 24px; display: flex; align-items: center; white-space: nowrap; gap: 5px; }
.node--root { padding-left: 10px; gap: 6px; }
.node--one { padding-left: 40px; gap: 11px; }
.node--one .mono { margin-left: 3px; }
.node--two { padding-left: 93px; gap: 13px; }
.node--three { padding-left: 59px; }
.mono { font-family: "Liberation Mono", "Noto Sans CJK SC", monospace; font-size: 16px; }
.node__sel {
  display: inline-flex;
  align-items: center;
  gap: 10px;
  width: 76px;
  height: 22px;
  padding-left: 5px;
  box-sizing: border-box;
  background: #3366c0;
  color: #06122a;
}
.chev { flex: none; }
.gear { flex: none; }

.props { width: 320px; margin-left: 6px; flex: none; display: flex; flex-direction: column; margin-bottom: 5px; }
.props__tabs { height: 31px; flex: none; display: flex; }
.props__tab { width: 94px; height: 31px; background: #fff; text-align: center; line-height: 21px; border-right: 1px solid #ddd; }
.props__grid { flex: 1; margin: 2px 0 0 7px; border: 1px solid #bbb; background: #fff; }
.prow { display: flex; height: 28.45px; box-sizing: border-box; border-bottom: 1px solid #ddd; }
.prow--head { height: 36px; }
.prow__num {
  width: 31px;
  flex: none;
  display: flex;
  align-items: center;
  justify-content: center;
  background: linear-gradient(#fafafa, #eee);
  border-right: 1px solid #ddd;
  font-family: "Liberation Mono", monospace;
  font-size: 16px;
}
.prow__name { flex: 1; display: flex; align-items: center; padding-left: 30px; white-space: nowrap; overflow: hidden; }
.prow--0 .prow__name { color: #2246ee; }
.prow--1 .prow__name, .prow--3 .prow__name, .prow--13 .prow__name { color: #8c8c8c; }
.prow--2 .prow__num { background: #fbd08f; color: #6b1a7c; }
.prow--2 .prow__name { background: #0078d7; color: #fff; }
.prow--13 .prow__name { padding-left: 4px; }
.prow__plus {
  width: 16px;
  height: 16px;
  margin-right: 8px;
  border: 1px solid #aaa;
  font-style: normal;
  line-height: 14px;
  text-align: center;
  color: #333;
  font-family: "Liberation Sans", sans-serif;
}
.rest { flex: 1; background: #fff; border-top: 2px solid #bdbdbd; margin-top: 31px; margin-bottom: 5px; border-bottom: 2px solid #bdbdbd; }

.status { height: 29px; flex: none; display: flex; gap: 4px; background: #f0f0f0; }
.status em { font-style: normal; font-family: "Liberation Mono", monospace; font-size: 15px; }
.status__cell { display: flex; align-items: center; padding-left: 3px; height: 28px; box-sizing: border-box; border-right: 1px solid #ddd; background: #f8f8f8; white-space: nowrap; overflow: hidden; }
.status__cell--a { width: 131px; }
.status__cell--b { width: 115px; }
.status__cell--c { width: 146px; }
.status__cell--d { width: 73px; }
.status__cell--e { width: 120px; }
.status__fill { flex: 1; }
.status__cell--f { width: 62px; border-right: 0; }

.taskbar { height: 30px; flex: none; display: flex; overflow: hidden; position: relative; background: #0c151e; }
.task { position: absolute; top: 2px; }
.task--view { left: 4px; top: 8px; }
.task--a { left: 79px; }
.task--b { left: 149px; }
.task--c { left: 207px; }
.task--d { left: 280px; top: 0; }
.task--e { left: 358px; top: 1px; }
.task-on { position: absolute; left: 413px; top: 0; width: 73px; height: 30px; background: #3a4349; display: flex; justify-content: center; }

.dialog {
  position: absolute;
  left: 557px;
  top: 170px;
  width: 1115px;
  height: 864px;
  display: flex;
  flex-direction: column;
  background: #f0f0f0;
  box-shadow: 0 0 14px rgba(0, 0, 0, 0.28);
  overflow: hidden;
  box-sizing: border-box;
}
.dialog__bar {
  height: 38px;
  flex: none;
  display: flex;
  align-items: center;
  justify-content: space-between;
  padding: 0 15px 5px 4px;
  background: #fff;
  border-top: 2px solid #1878c8;
  border-right: 1px solid #1878c8;
  border-left: 1px solid #1878c8;
  box-sizing: border-box;
}
.dialog__body { flex: 1; min-height: 0; display: flex; }
.group { margin: 0; padding: 0; border: 1px solid #dcdcdc; box-sizing: border-box; min-width: 0; }
.group legend { padding: 0 3px; line-height: 20px; }
.group--shapes { width: 722px; height: 755px; margin: 12px 0 0 15px; padding: 7px 0 0 5px; }
.group--shapes legend { margin-left: 0; }
.thumbs { display: grid; grid-template-columns: repeat(3, 232px); grid-auto-rows: 236px; gap: 7px 5px; }
.thumb {
  box-sizing: border-box;
  padding: 12px 10px 0 10px;
  border: 1px solid;
  border-color: #fff #b5b5b5 #b5b5b5 #fff;
  background: #f0f0f0;
}
.thumb--on { background: #00ffff; border-color: #00ffff; }
.thumb__img { display: block; width: 211px; height: 210px; }
.dialog__side { width: 378px; display: flex; flex-direction: column; flex: none; padding-left: 25px; box-sizing: border-box; }
.params {
  width: 322px;
  height: 400px;
  flex: none;
  margin: 14px 0 0 10px;
  padding: 3px 0 0 2px;
  box-sizing: border-box;
  border: 2px solid #bfc3c8;
  background: #fff;
}
.params__head, .params__row { display: flex; }
.params__head { height: 34px; }
.params__corner, .params__num { width: 31px; flex: none; background: linear-gradient(#fbfbfb, #eee); border-right: 1px solid #ddd; box-sizing: border-box; }
.params__name { width: 136px; text-align: center; line-height: 28px; background: linear-gradient(#fbfbfb, #eee); border-right: 1px solid #ddd; box-sizing: border-box; }
.params__value { width: 149px; text-align: center; line-height: 28px; color: #6b1a7c; background: linear-gradient(#fbd99b, #f2bc5d); }
.params__row { height: 28.5px; box-sizing: border-box; border-bottom: 2px solid #d8d8d8; font-family: "Liberation Mono", "Noto Sans CJK SC", monospace; font-size: 15px; line-height: 26px; }
.params__num { text-align: center; font-size: 16px; }
.params__key { width: 136px; padding-left: 3px; box-sizing: border-box; border-right: 1px solid #ddd; letter-spacing: -0.6px; }
.params__val { width: 149px; padding-left: 3px; box-sizing: border-box; font-family: "Liberation Sans", sans-serif; font-size: 16px; }
.params__row--on .params__num { background: #fbd08f; color: #6b1a7c; }
.params__row--on .params__key { background: #0078d7; color: #fff; }
.params__row--on .params__val { background: #d8e9f8; }
.group--preview { width: 336px; height: 347px; margin-top: 7px; margin-left: -1px; padding: 7px 0 0 10px; }
.group--preview legend { margin-left: -4px; }
.preview { display: block; width: 315px; height: 314px; }
.dialog__btns { display: flex; gap: 23px; margin: 18px 0 0 93px; }
.btn { width: 108px; height: 38px; box-sizing: border-box; border: 2px solid #bdbdbd; background: #e1e1e1; text-align: center; line-height: 34px; }
.btn--ok { border-color: #0078d7; }
.dialog__shade { position: absolute; left: 0; right: 0; bottom: 0; height: 31px; background: #222; mix-blend-mode: multiply; }

.tray { position: absolute; left: 1378px; right: 0; bottom: 0; height: 30px; display: flex; align-items: flex-end; gap: 14px; color: #fff; overflow: hidden; }
.tray__ime { width: 24px; line-height: 20px; font-size: 20px; margin-bottom: -4px; }
.tray__m { width: 22px; margin-left: 4px; background: #fff; color: #000; font: 700 18px/16px "Liberation Sans", sans-serif; height: 10px; text-align: center; }
.tray__time { position: absolute; left: 292px; top: 2px; font-size: 20px; line-height: 24px; font-family: "Liberation Sans", sans-serif; }
.tray__box { position: absolute; left: 392px; top: 20px; width: 16px; height: 14px; border: 1px solid #fff; }
</style>
